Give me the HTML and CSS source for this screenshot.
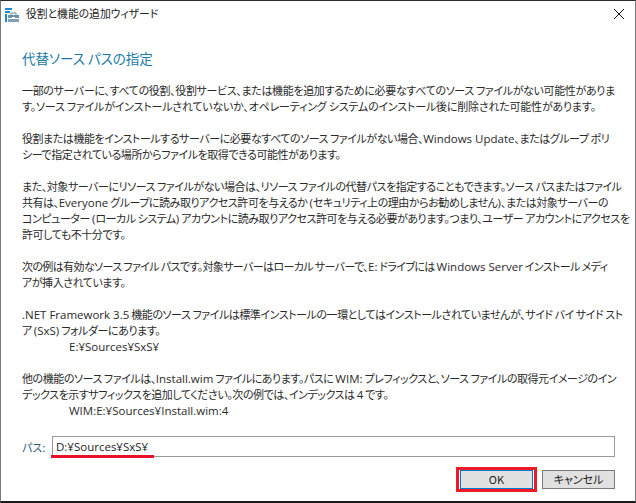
FILE: index.html
```html
<!DOCTYPE html>
<html lang="ja">
<head>
<meta charset="utf-8">
<title>役割と機能の追加ウィザード</title>
<link rel="stylesheet" href="styles.css">
</head>
<body>
<div class="window">
  <header class="titlebar">
    <svg class="app-icon" width="14" height="14" viewBox="0 0 14 14">
      <rect x="0" y="0" width="7" height="2" fill="#1e88d2"/>
      <rect x="0" y="3" width="5" height="2" fill="#1e88d2"/>
      <rect x="0" y="6" width="2" height="8" fill="#1e88d2"/>
      <path d="M6 7V5h5v2" fill="none" stroke="#6f8797"/>
      <rect x="3" y="7" width="11" height="3" fill="#6c93ac"/>
      <rect x="3" y="11" width="11" height="3" fill="#7fa0b6"/>
      <rect x="7" y="9" width="3" height="2" fill="#fff"/>
    </svg>
    <span class="title">役割と機能の追加ウィザード</span>
    <svg class="close" width="10" height="10" viewBox="0 0 10 10"><path d="M0 0l10 10M10 0L0 10" stroke="#111" fill="none"/></svg>
  </header>
  <main class="content">
    <h1 class="heading">代替ソース パスの指定</h1>
    <div class="body-text">
      <p><span class="loose">一部のサーバーに、すべての役割、役割サービス、または機能を追加するために必要なすべてのソース ファイルがない可能性がありま</span><br><span class="looser">す。ソース ファイルがインストールされていないか、オペレーティング システムのインストール後に削除された可能性があります。</span></p>
      <p>役割または機能をインストールするサーバーに必要なすべてのソース ファイルがない場合、<span class="lat">Windows Update</span>、またはグループ ポリ<br>シーで指定されている場所からファイルを取得できる可能性があります。</p>
      <p>また、対象サーバーにリソース ファイルがない場合は、リソース ファイルの代替パスを指定することもできます。ソース パスまたはファイル<br>共有は、<span class="lat">Everyone</span> グループに読み取りアクセス許可を与えるか <span class="lat">(</span>セキュリティ上の理由からお勧めしません<span class="lat">)</span>、または対象サーバーの<br>コンピューター <span class="lat">(</span>ローカル システム<span class="lat">)</span> アカウントに読み取りアクセス許可を与える必要があります。つまり、ユーザー アカウントにアクセスを<br>許可しても不十分です。</p>
      <p><span class="tight">次の例は有効なソース ファイル パスです。対象サーバーはローカル サーバーで、<span class="lat">E:</span> ドライブには <span class="lat">Windows Server</span> インストール メディ</span><br>アが挿入されています。</p>
      <p><span class="lat">.NET Framework 3.5</span> 機能のソース ファイルは標準インストールの一環としてはインストールされていませんが、サイド バイ サイド スト<br>ア <span class="lat">(SxS)</span> フォルダーにあります。<br><span class="example lat">E:¥Sources¥SxS¥</span></p>
      <p>他の機能のソース ファイルは、<span class="lat">Install.wim</span> ファイルにあります。パスに <span class="lat">WIM:</span> プレフィックスと、ソース ファイルの取得元イメージのイン<br>デックスを示すサフィックスを追加してください。次の例では、インデックスは <span class="lat">4</span> です。<br><span class="example lat">WIM:E:¥Sources¥Install.wim:4</span></p>
    </div>
    <div class="path-row">
      <label class="path-label">パス:</label>
      <div class="path-input">
        <span class="lat">D:¥Sources¥SxS¥</span>
        <span class="underline"></span>
      </div>
    </div>
    <div class="buttons">
      <div class="highlight"><button class="btn btn-default">OK</button></div>
      <button class="btn">キャンセル</button>
    </div>
  </main>
</div>
</body>
</html>
```
FILE: styles.css
```css
* { box-sizing: border-box; }
html, body { margin: 0; padding: 0; }
body {
  width: 636px;
  height: 503px;
  background: #fff;
  font-family: "Noto Sans CJK JP", "Noto Sans", sans-serif;
  font-size: 11px;
  font-feature-settings: "palt";
  color: #2a2a2a;
  overflow: hidden;
}
.window {
  width: 636px;
  height: 503px;
  border-top: 1px solid #2b2b2b;
  border-left: 1px solid #7a7a7a;
  border-right: 1px solid #7a7a7a;
  border-bottom: 2px solid #1a1a1a;
  display: flex;
  flex-direction: column;
}
.titlebar {
  height: 24px;
  display: flex;
  align-items: center;
  padding: 0 0 0 4px;
  flex: none;
}
.app-icon { flex: none; margin-right: 7px; margin-top: 4px; }
.title { font-size: 10.8px; color: #222; flex: 1; }
.close { flex: none; margin-right: 11px; margin-top: 2px; }
.content {
  flex: 1;
  display: flex;
  flex-direction: column;
  padding: 21px 0 0 21px;
}
.heading {
  margin: 0 0 12px;
  font-size: 13.5px;
  line-height: 24px;
  font-weight: 400;
  color: #1a7aa8;
}
.body-text { white-space: nowrap; line-height: 16px; letter-spacing: -0.45px; }
.body-text p { margin: 0 0 16px; }
.loose { letter-spacing: -0.35px; }
.looser { letter-spacing: -0.2px; }
.tight { letter-spacing: -0.62px; }
.lat {
  font-family: "Open Sans", "Noto Sans", sans-serif;
  font-size: 11.5px;
  line-height: 1;
  letter-spacing: 0;
}
.example { margin-left: 47px; }
.path-row {
  display: flex;
  align-items: center;
  margin-top: 2px;
}
.path-label { width: 30px; color: #33566e; flex: none; }
.path-input {
  position: relative;
  width: 563px;
  height: 21px;
  border: 1px solid #999;
  padding-left: 3px;
  line-height: 19px;
  color: #222;
}
.underline {
  position: absolute;
  left: -2px;
  bottom: -2px;
  width: 103px;
  height: 3px;
  background: #e8132a;
}
.buttons {
  display: flex;
  justify-content: flex-end;
  align-items: center;
  gap: 5px;
  margin-top: 10px;
  padding-right: 20px;
}
.highlight {
  border: 3px solid #ed1c24;
  padding: 0 1px;
  display: flex;
}
.btn {
  width: 73px;
  height: 19px;
  padding: 0;
  font: inherit;
  line-height: 17px;
  background: #e1e1e1;
  border: 1px solid #7a7a7a;
  color: #222;
  border-radius: 0;
}
.btn-default { border-color: #0078d7; }
```
